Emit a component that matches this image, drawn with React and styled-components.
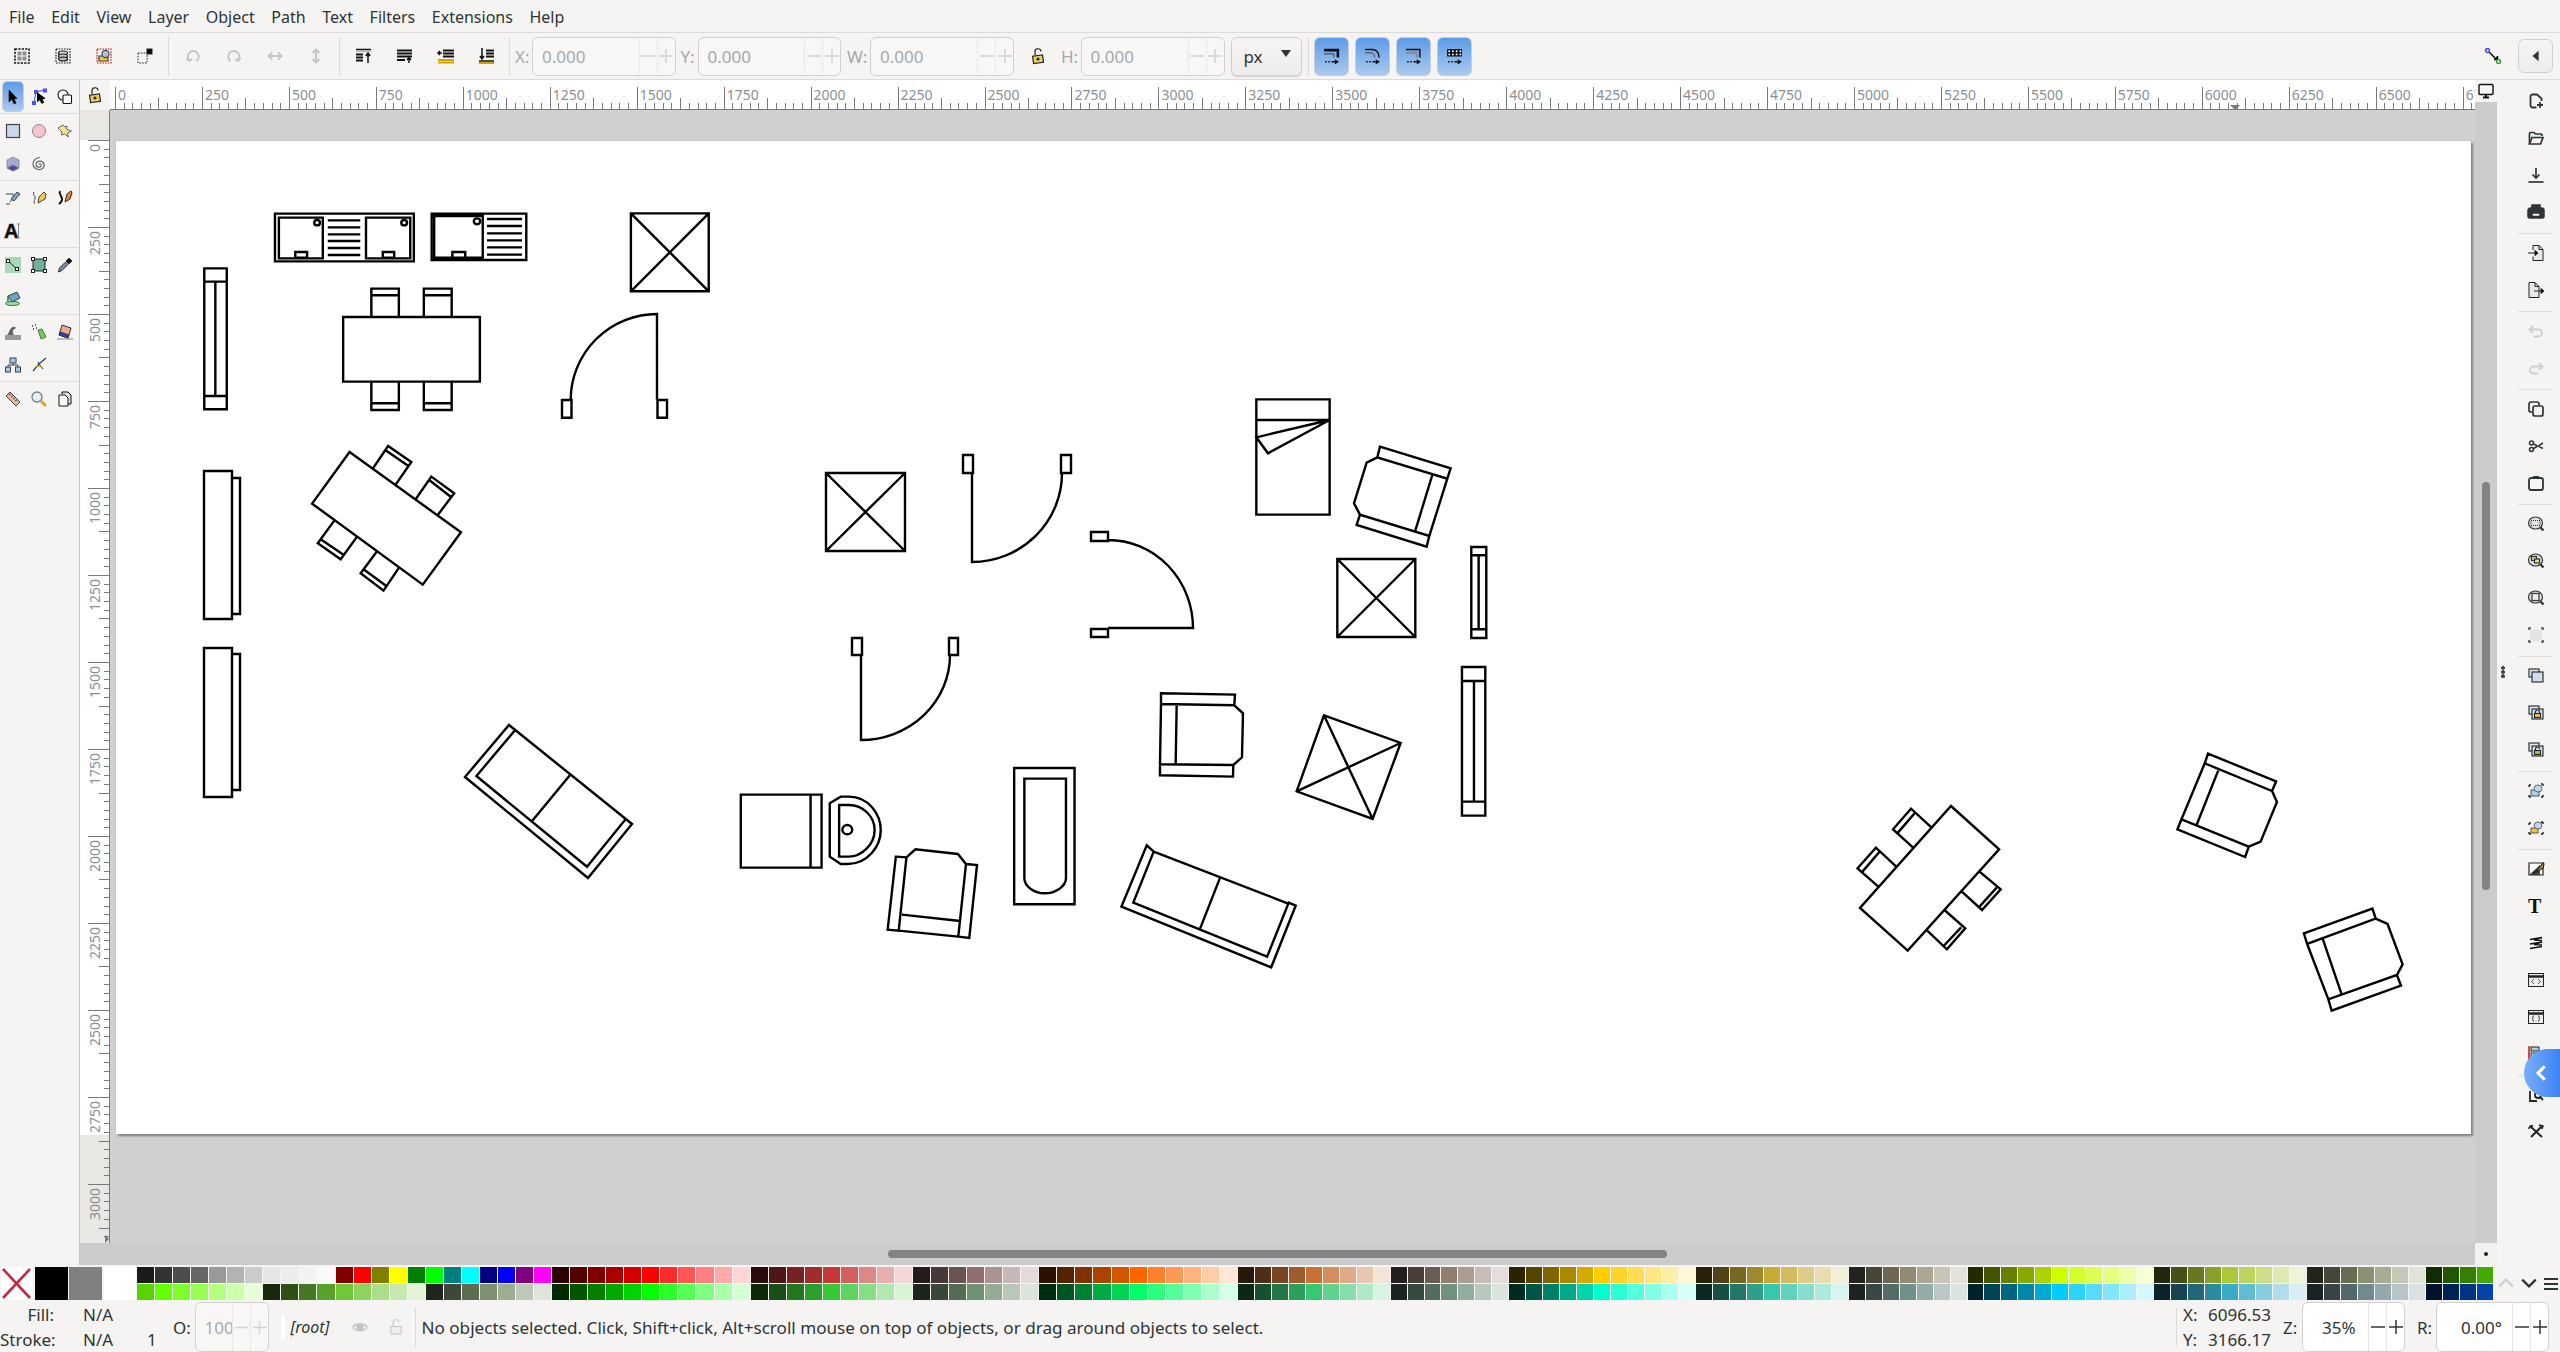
import React from 'react';
import styled, { createGlobalStyle } from 'styled-components';

const GlobalStyle = createGlobalStyle`
  html, body { margin: 0; padding: 0; background: #f5f4f2; }
  body { font-family: "Noto Sans", "Open Sans", sans-serif; color: #2e3436; }
`;

const BAR = '#f5f4f2';
const LINE = '#dddbd8';

const Shell = styled.div`
  width: 2560px;
  height: 1352px;
  display: flex;
  flex-direction: column;
  overflow: hidden;
  position: relative;
  background: ${BAR};
`;

const MenuBar = styled.div`
  height: 32px;
  box-sizing: content-box;
  border-bottom: 1px solid ${LINE};
  display: flex;
  align-items: center;
  padding-left: 9px;
  gap: 16.6px;
  font-size: 16px;
  color: #2e3436;
  span { position: relative; top: 1px; }
`;

const Toolbar = styled.div`
  height: 47px;
  box-sizing: border-box;
  border-bottom: 1px solid ${LINE};
  display: flex;
  align-items: center;
  padding-left: 1px;
`;

const ToolBtn = styled.div`
  width: ${p => p.$w ?? 41}px;
  height: 39px;
  display: flex;
  align-items: center;
  justify-content: center;
  flex: none;
`;

const VSep = styled.div`
  width: 1px;
  height: 39px;
  flex: none;
  background: ${LINE};
  margin: 0 ${p => p.$right ?? 3}px 0 ${p => p.$left ?? 3}px;
`;

const FieldLabel = styled.span`
  width: ${p => p.$w}px;
  margin-left: ${p => p.$ml ?? 0}px;
  flex: none;
  font-size: 17px;
  color: ${p => (p.$off ? '#a4a9ad' : '#2e3436')};
`;

const Spin = styled.div`
  width: ${p => p.$w}px;
  height: ${p => p.$h ?? 39}px;
  flex: none;
  box-sizing: border-box;
  display: flex;
  border: 1px solid #d2d0cc;
  border-radius: 6px;
  background: ${p => (p.$off ? '#f8f7f5' : '#ffffff')};
  color: ${p => (p.$off ? '#a4a9ad' : '#2e3436')};
  font-size: 17px;
  overflow: hidden;
`;

const SpinValue = styled.div`
  flex: 1;
  display: flex;
  align-items: center;
  padding-left: ${p => p.$pad ?? 9}px;
  min-width: 0;
`;

const SpinCell = styled.div`
  width: 17px;
  flex: none;
  display: flex;
  align-items: center;
  justify-content: center;
  border-left: 1px solid ${p => (p.$off ? '#e9e8e5' : '#e6e5e2')};
`;

const Dropdown = styled.div`
  width: 71px;
  height: 39px;
  margin-left: 6px;
  box-sizing: border-box;
  flex: none;
  display: flex;
  align-items: center;
  justify-content: space-between;
  padding: 0 10px 0 12px;
  border: 1px solid #d2d0cc;
  border-radius: 6px;
  background: linear-gradient(#f6f5f3, #eeedeb);
  box-shadow: 0 1px 1px rgba(0, 0, 0, 0.15);
  font-size: 17px;
`;

const Caret = styled.span`
  width: 0;
  height: 0;
  margin-bottom: 5px;
  border-left: 5px solid transparent;
  border-right: 5px solid transparent;
  border-top: 7px solid #2e3436;
`;

const BlueBtn = styled.div`
  width: 35px;
  height: 39px;
  box-sizing: border-box;
  flex: none;
  margin-right: 6px;
  display: flex;
  align-items: center;
  justify-content: center;
  border: 1px solid #c4cfdb;
  border-radius: 6px;
  background: linear-gradient(#5d9be8, #abc9ee);
`;

const ToolbarEnd = styled.div`
  margin-left: auto;
  display: flex;
  align-items: center;
  padding-right: 7px;
`;

const SnapSlot = styled.div`
  width: 22px;
  margin-right: 14px;
  display: flex;
  justify-content: center;
`;

const CollapseBtn = styled.div`
  width: 35px;
  height: 34px;
  box-sizing: border-box;
  display: flex;
  align-items: center;
  justify-content: center;
  border: 1px solid #d2d0cc;
  border-radius: 6px;
  background: linear-gradient(#f6f5f3, #eeedeb);
`;

const Main = styled.div`
  height: 1185px;
  display: flex;
`;

const LeftTools = styled.div`
  width: 80px;
  flex: none;
  box-sizing: border-box;
  border-right: 1px solid #c9c8c5;
  padding-right: 1px;
`;

const ToolGroup = styled.div`
  display: grid;
  grid-template-columns: repeat(3, 26px);
  grid-auto-rows: 33px;
  border-bottom: 1px solid ${LINE};
  &:last-child { border-bottom: 0; }
`;

const ToolCell = styled.div`
  display: flex;
  align-items: center;
  justify-content: center;
  box-sizing: border-box;
  ${p => p.$active && `
    margin: 1px 2px 1px 2px;
    border-radius: 5px;
    border: 1px solid #c4cfdb;
    background: linear-gradient(#5d9be8, #abc9ee);
  `}
`;

const Workspace = styled.div`
  flex: 1;
  display: grid;
  grid-template-columns: 30px 2365px 22px;
  grid-template-rows: 30px 1133px 22px;
`;

const Corner = styled.div`
  background: ${BAR};
  display: flex;
  align-items: center;
  justify-content: center;
`;

const RulerSvg = styled.svg`
  display: block;
  background: #ffffff;
  text { font-family: "Noto Sans", sans-serif; font-size: 14px; fill: #8b8f92; }
  line { stroke: #77797b; stroke-width: 1; shape-rendering: crispEdges; }
`;

const Canvas = styled.div`
  background: #d0d0d0;
  padding: 31px 0 0 6px;
  overflow: hidden;
`;

const Page = styled.div`
  width: 2355px;
  height: 993px;
  background: #ffffff;
  box-shadow: 0 0 1px #9a9a9a, 2px 2px 2px #7d7d7d;
`;

const Drawing = styled.svg`
  display: block;
  fill: none;
  stroke: #000000;
  * { vector-effect: non-scaling-stroke; stroke-width: 2.4px; stroke-linejoin: miter; }
`;

const MonitorCell = styled.div`
  background: #cbcbcb;
`;

const MonitorBtn = styled.div`
  width: 22px;
  height: 22px;
  background: ${BAR};
  display: flex;
  align-items: center;
  justify-content: center;
`;

const VTrack = styled.div`
  background: #cbcbcb;
  padding: 372px 0 0 7px;
`;

const VThumb = styled.div`
  width: 8px;
  height: 408px;
  border-radius: 4px;
  background: #808484;
`;

const HTrack = styled.div`
  grid-column: 1 / span 2;
  background: #cbcbcb;
  padding: 7px 0 0 808px;
`;

const HThumb = styled.div`
  width: 779px;
  height: 8px;
  border-radius: 4px;
  background: #808484;
`;

const CornerDot = styled.div`
  background: #f2f1ef;
  display: flex;
  align-items: center;
  justify-content: center;
  &::before {
    content: '';
    width: 4px;
    height: 4px;
    border-radius: 50%;
    background: #222;
  }
`;

const RightTools = styled.div`
  flex: 1;
  padding: 2.5px 0 0 21px;
  position: relative;
`;

const DockHandle = styled.div`
  position: absolute;
  left: 4px;
  top: 586px;
  width: 4px;
  height: 12px;
  background: radial-gradient(circle at 2px 2px, #444 1.7px, transparent 2px) 0 0 / 4px 4.2px repeat-y;
`;

const CmdBtn = styled.div`
  width: 35px;
  height: 37px;
  display: flex;
  align-items: center;
  justify-content: center;
`;

const CmdSep = styled.div`
  width: 35px;
  height: 1px;
  margin: 2px 0 1px;
  background: ${LINE};
`;

const FloatTab = styled.div`
  position: absolute;
  right: 0;
  top: 969px;
  width: 36px;
  height: 48px;
  border-radius: 24px 0 0 24px;
  background: linear-gradient(90deg, #79aef5, #3d84f7);
  display: flex;
  align-items: center;
  justify-content: center;
`;

const PaletteBar = styled.div`
  height: 37px;
  box-sizing: border-box;
  padding: 2px 0 0 1px;
  display: flex;
  flex: none;
`;

const BigSwatch = styled.div`
  width: ${p => p.$w}px;
  margin-right: ${p => p.$mr}px;
  height: 33px;
  flex: none;
  background: ${p => p.$color};
`;

const NoneMark = styled.svg`
  display: block;
  width: 31px;
  height: 33px;
`;

const SwatchGrid = styled.div`
  display: grid;
  grid-template-columns: repeat(61, 18.06px) repeat(74, 16.97px);
  grid-template-rows: 17px 17px;
  height: 34px;
  flex: none;
`;

const Swatch = styled.div`
  margin: 0 1px 1px 0;
  background: ${p => p.$color};
`;

const PaletteEnd = styled.div`
  display: flex;
  align-items: center;
  padding: 0 0 3px 3px;
  gap: 5px;
`;

const StatusBar = styled.div`
  height: 50px;
  display: flex;
  align-items: center;
  font-size: 17px;
  padding-right: 11px;
`;

const StyleBlock = styled.div`
  width: 173px;
  flex: none;
  display: grid;
  grid-template-columns: 54px 29px 64px auto;
  grid-auto-rows: 25px;
  align-items: center;
`;

const StyleKey = styled.span`
  grid-column: 1;
  text-align: right;
`;

const StyleVal = styled.span`
  grid-column: ${p => p.$col};
`;

const LayerTick = styled.div`
  width: 4px;
  height: 24px;
  margin: 0 6px 0 12px;
  background: #ffffff;
  flex: none;
`;

const LayerName = styled.span`
  font-style: italic;
  font-size: 16px;
  width: 51px;
  flex: none;
`;

const StatusIcon = styled.div`
  width: 36px;
  flex: none;
  display: flex;
  justify-content: center;
`;

const Message = styled.span`
  margin-left: 6px;
  flex: 1;
  font-size: 17.1px;
  white-space: nowrap;
`;

const Coords = styled.div`
  width: 107px;
  flex: none;
  box-sizing: border-box;
  padding-left: 6px;
  height: 38px;
  border-left: 1px solid ${LINE};
  display: grid;
  grid-template-columns: 25px auto;
  grid-auto-rows: 25px;
  align-items: center;
  align-content: center;
`;

const Icon = styled.svg`
  display: block;
  width: ${p => p.$s ?? 16}px;
  height: ${p => p.$s ?? 16}px;
  flex: none;
  overflow: visible;
`;

const TextIcon = styled.svg`
  display: block;
  width: 16px;
  height: 16px;
  flex: none;
  overflow: visible;
  text { font-weight: 700; fill: #111; }
`;

const G = (p) => <Icon viewBox="0 0 16 16" $s={p.s} fill="none" stroke={p.c ?? '#2e3436'} strokeWidth={p.w ?? 1.5}>{p.children}</Icon>;

const ICONS = {
  selAll: <G c="#111" w={1.5}><rect x="1" y="1" width="14" height="14" strokeDasharray="2.2 1.2" /><rect x="3.5" y="3.5" width="4" height="4" fill="#8e8e8e" stroke="none" /><rect x="8.5" y="3.5" width="4" height="4" fill="#8e8e8e" stroke="none" /><rect x="3.5" y="8.5" width="4" height="4" fill="#8e8e8e" stroke="none" /><rect x="8.5" y="8.5" width="4" height="4" fill="#8e8e8e" stroke="none" /></G>,
  selLayers: <G c="#111" w={1.2}><rect x="1" y="1" width="14" height="14" strokeDasharray="1.5 1.2" /><ellipse cx="8" cy="5" rx="4.5" ry="2" fill="#ddd" /><ellipse cx="8" cy="8" rx="4.5" ry="2" fill="#ccc" /><ellipse cx="8" cy="11" rx="4.5" ry="2" fill="#bbb" /></G>,
  deselect: <G c="#c00" w={1.1}><rect x="1" y="1" width="14" height="14" strokeDasharray="1.5 1.2" /><path d="M3 8h9v5H3z" fill="#f2c94c" stroke="#333" /><circle cx="9.5" cy="6" r="3.6" fill="#a9c3dc" stroke="#444" /></G>,
  touch: <G c="#222" w={1}><rect x="1" y="5" width="9" height="10" strokeDasharray="1.5 1.3" /><rect x="10" y="1" width="5" height="5" fill="#000" /></G>,
  rotCcw: <G c="#c6c6c6" w={2}><path d="M4 12a5.5 5.5 0 1 1 7.5 1" /><path d="M1.5 10L4 13l3-2" /></G>,
  rotCw: <G c="#c6c6c6" w={2}><path d="M12 12a5.5 5.5 0 1 0-7.5 1" /><path d="M14.5 10L12 13l-3-2" /></G>,
  flipH: <G c="#c6c6c6" w={2}><path d="M1.5 8h13M5 4.5L1.5 8 5 11.5M11 4.5L14.5 8 11 11.5" /></G>,
  flipV: <G c="#c6c6c6" w={2}><path d="M8 1.5v13M4.5 5L8 1.5 11.5 5M4.5 11L8 14.5 11.5 11" /></G>,
  raiseTop: <G c="#111"><path d="M0 1.5h15" /><path d="M0 3.5h15" stroke="#bbb" /><path d="M0 6.5h7M0 9.5h7M0 12.5h7" strokeWidth="2" /><path d="M12 15V6M9.8 8L12 5l2.2 3" /></G>,
  raise: <G c="#111"><path d="M0 2.5h15M0 5.5h15M0 8.5h15" strokeWidth="2" /><path d="M0 12h8" strokeWidth="2" /><path d="M12 15v-5M10 12l2-2.5 2 2.5" /></G>,
  lower: <G c="#111"><path d="M5 2.5h11M5 5.5h11M5 8.5h11" strokeWidth="2" /><path d="M0 12h16M0 14.5h16" stroke="#d2a300" strokeWidth="2" /><path d="M4 5H0M2 3L0 5l2 2" /></G>,
  lowerBot: <G c="#111"><path d="M7 2.5h8M7 5.5h8M7 8.5h8" strokeWidth="2" /><path d="M0 13h15" /><path d="M0 15h15" stroke="#d2a300" strokeWidth="2" /><path d="M3 0v10M1 8l2 3 2-3" /></G>,
  lockOpen: <G c="#222" w={1.2}><rect x="3" y="7.5" width="10" height="7.5" fill="#f0d060" transform="rotate(-8 8 11)" /><path d="M5 7V4a3 3 0 0 1 6-.5" /><circle cx="8" cy="11" r="1" fill="#333" /></G>,
  lockGray: <G c="#ccc" w={1.2}><rect x="3" y="7.5" width="10" height="7.5" fill="#eee" /><path d="M5 7V4a3 3 0 0 1 6-.5" /></G>,
  eye: <G c="#c4c4c4"><path d="M1 8c2-4 12-4 14 0-2 5-12 5-14 0z" /><circle cx="8" cy="8" r="3" fill="#c4c4c4" /></G>,
  snap: <G c="#000" w={1.4}><path d="M3 3l9 9" /><path d="M9 11.5h3.5V8" fill="#000" /><circle cx="2.5" cy="2.5" r="2" stroke="#4a4af0" fill="#ccd" /><circle cx="13.5" cy="13.5" r="2" stroke="#3a9a3a" fill="#cec" /></G>,
  monitor: <G c="#111" w={1.4}><rect x="1" y="1.5" width="14" height="10" rx="1" /><path d="M5 14.5h6" strokeWidth="2" /><path d="M8 12v2" strokeWidth="2" /></G>,
  select: <G c="#000" w={0.6}><path d="M4 1l8 8.5H9l2 4.5-2 1-2-4.7L4 13z" fill="#000" /></G>,
  node: <G c="#4a4af0" w={1}><path d="M3 14L5 3l9-2" /><rect x="1.5" y="12.5" width="3" height="3" fill="#5a5af5" /><rect x="3.5" y="1.5" width="3" height="3" fill="#5a5af5" /><rect x="12.5" y="0" width="3" height="3" fill="#5a5af5" /><path d="M6.5 4L14 9.5h-3l1.5 4-1.8.8L9 10.5l-2.5 2z" fill="#000" stroke="#000" /></G>,
  builder: <G c="#111" w={1.1}><circle cx="6" cy="6" r="5" fill="#fff" /><rect x="6" y="6" width="8.5" height="8.5" rx="1" fill="#fff" /></G>,
  rect: <G c="#444" w={1.2}><rect x="1.5" y="1.5" width="13" height="13" fill="#c7d8ea" /></G>,
  ellipse: <G c="#888" w={1}><circle cx="8" cy="8" r="6.5" fill="#f7c3cd" /></G>,
  star: <G c="#666" w={1}><path d="M1 5l5-3 2 2 2-1-.5 3 5 2-4 2 1 4-4-3-3 1 .5-3z" fill="#f5e487" /></G>,
  box: <G c="#888" w={0.8}><path d="M8 1l6 3v8l-6 3-6-3V4z" fill="#a6a9d4" /><path d="M2 12l6-3 6 3-6 3z" fill="#4a4aa0" /></G>,
  spiral: <G c="#666" w={1.2}><path d="M8 8.5c1-1.5 3 0 2 1.5-1 2-5 1.5-5-1.5 0-3 4-4.5 6.5-2.5 3 2.5 1.5 7-2 7.5-4 .7-7.5-2-7.5-5.5C2 4.5 5 1.5 9 1.5" /></G>,
  pen: <G c="#444" w={1}><path d="M1 4h7c1 2-1 5-3 8 M1 14h4" /><path d="M6 9l6-7 3 2-6 7z" fill="#7aa7cf" /></G>,
  pencil: <G c="#444" w={1}><path d="M3 2c-2 3 2 4 1 7-.5 2-2 3 0 5" /><path d="M7 13l1-6 5-5 2 2-1 5z" fill="#f2c94c" /></G>,
  callig: <G c="#111" w={2}><path d="M3 1C1 5 6 6 5 10c-.5 2-2 3-3 4" /><path d="M8 12l2-8 4-3 1 2-2 6z" fill="#e08a3a" strokeWidth="1" stroke="#422" /></G>,
  gradient: <G c="#222" w={1}><rect x="0" y="0" width="16" height="16" fill="#a8d9b6" stroke="none" /><path d="M3 4l9 8" /><rect x="1.5" y="2.5" width="3" height="3" fill="#fff" /><rect x="10.5" y="10.5" width="3" height="3" fill="#fff" /></G>,
  mesh: <G c="#222" w={1}><rect x="2" y="2" width="12" height="12" fill="#6fb09a" /><rect x="0.5" y="0.5" width="3" height="3" fill="#fff" /><rect x="12.5" y="0.5" width="3" height="3" fill="#fff" /><rect x="0.5" y="12.5" width="3" height="3" fill="#fff" /><rect x="12.5" y="12.5" width="3" height="3" fill="#fff" /></G>,
  dropper: <G c="#333" w={1}><path d="M1.5 15l1-4 6-6 2.5 2.5-6 6z" fill="#6f8db0" /><path d="M9 4l3-3 3 3-3 3z" fill="#111" /></G>,
  bucket: <G c="#2d7a3a" w={1}><ellipse cx="7.5" cy="13.5" rx="7" ry="2" fill="#a8d9a0" /><path d="M3 6l9-4 3 6-8 4z" fill="#6da3c7" stroke="#345" /><path d="M3 6v6" strokeWidth="1.5" /></G>,
  tweak: <G c="#777" w={1}><path d="M0 11h16v5H0z" fill="#999" stroke="none" /><path d="M2 11c2-1 2-7 6-8 3-1 3 1 2 2-2 0-3 3-1 6z" fill="#666" stroke="none" /></G>,
  spray: <G c="#333" w={1}><path d="M7 6l4-1 4 8-5 2z" fill="#7ec850" stroke="#385" /><path d="M1 2h1M4 1h1M2 5h1M5 4h1" strokeWidth="1.5" /></G>,
  eraser: <G c="#333" w={1}><path d="M5 1l9 3-3 10-9-3z" fill="#f0a890" /><path d="M3 8l9 3-1 3-9-3z" fill="#3a3ad0" /><path d="M0 15h16" stroke="#888" /></G>,
  connector: <G c="#345" w={1}><path d="M8 4v4M3 11V8h10v3" /><rect x="5" y="1" width="6" height="5" fill="#a9c6e2" /><rect x="0.5" y="10" width="5" height="5" fill="#a9c6e2" /><rect x="10.5" y="10" width="5" height="5" fill="#a9c6e2" /></G>,
  compass: <G c="#345" w={1.2}><path d="M15 1l-7 6-6 7M8 7l4 5M8 7l-1-2" /><path d="M5 9l6 1" stroke="#e0b030" /></G>,
  measure: <G c="#444" w={1}><path d="M1 5l4-4 10 10-4 4z" fill="#e8b8a0" /><path d="M4 4l2-1M6 6l2-1M8 8l2-1M10 10l2-1" /></G>,
  zoom: <G c="#6a7f90" w={1.3}><circle cx="6" cy="6" r="5" fill="#e6eef6" /><path d="M10 10l5 5" stroke="#e0a030" strokeWidth="2.6" /></G>,
  pages: <G c="#111" w={1}><path d="M5 3V1h6l3 3v9h-3" fill="#ddd" /><path d="M2 4h6l3 3v8H2z" fill="#fff" /></G>,
  newDoc: <G><path d="M8.5 14.5H4.5a2 2 0 0 1-2-2v-9a2 2 0 0 1 2-2H9l4.5 4v2.5" strokeWidth="1.8" /><path d="M12 9v6M9 12h6" strokeWidth="1.8" /></G>,
  open: <G w={1.7}><path d="M1.5 14V3.5a1 1 0 0 1 1-1h3.5l1.5 1.5h5.5a1 1 0 0 1 1 1V6" /><path d="M1.5 14l2.5-6.5h11l-2.5 6.5z" /></G>,
  save: <G w={1.7}><path d="M8 1v10M4.5 7.5L8 11l3.5-3.5" /><path d="M0.5 15h15" /></G>,
  print: <G stroke="none"><path d="M4 1h8v2H4zM2.5 4h11A2.5 2.5 0 0 1 16 6.5v6a1.5 1.5 0 0 1-1.5 1.5h-13A1.5 1.5 0 0 1 0 12.5v-6A2.5 2.5 0 0 1 2.5 4zM4 9v3.5h8V9z" fill="#2e3436" fillRule="evenodd" /></G>,
  importDoc: <G c="#222" w={1}><path d="M5 5V.5h6l4 4v11H5v-4" fill="#e9e9e9" /><path d="M11 .5v4h4" /><path d="M0 8h9" /><path d="M7 5.5L10 8l-3 2.5z" fill="#000" /></G>,
  exportDoc: <G c="#222" w={1}><path d="M1 .5h6l4 4v11H1z" fill="#e9e9e9" /><path d="M7 .5v4h4" /><path d="M6 9h9" /><path d="M13 6.5L16 9l-3 2.5z" fill="#000" /></G>,
  undo: <G c="#cfcfcf" w={1.8}><path d="M5 3L1.5 6.5 5 10" /><path d="M1.5 6.5h9a3.5 3.5 0 0 1 3.5 3.5c0 2-1.5 3.5-3.5 3.5H6" /></G>,
  redo: <G c="#cfcfcf" w={1.8}><path d="M11 3l3.5 3.5L11 10" /><path d="M14.5 6.5h-9A3.5 3.5 0 0 0 2 10c0 2 1.5 3.5 3.5 3.5H10" /></G>,
  copy: <G w={1.7}><path d="M4 11H3a2 2 0 0 1-2-2V3a2 2 0 0 1 2-2h6a2 2 0 0 1 2 2v1" /><rect x="5" y="5" width="10" height="10" rx="2" /></G>,
  cut: <G w={1.5}><circle cx="3.5" cy="5" r="2" /><circle cx="3.5" cy="11.5" r="2" /><path d="M5.5 6L15 10.5M5.5 10.5l3.5-2M11 7.5l4-2.5" /></G>,
  paste: <G w={1.8}><rect x="1" y="3" width="14" height="12" rx="2" /><path d="M5 2.5h6" strokeWidth="3" /></G>,
  zoomSel: <G c="#333" w={1.2}><ellipse cx="7.5" cy="7" rx="7" ry="6" fill="#dfe3e6" /><rect x="3" y="4.5" width="9" height="5" strokeDasharray="1 1" /><path d="M12.5 11.5l3 3" strokeWidth="2.4" /></G>,
  zoomDraw: <G c="#333" w={1.2}><ellipse cx="7.5" cy="7" rx="7" ry="6" fill="#dfe3e6" /><rect x="3.5" y="3.5" width="5" height="4" fill="#f0d890" /><rect x="6.5" y="6" width="5" height="4" fill="#f0d890" /><path d="M12.5 11.5l3 3" strokeWidth="2.4" /></G>,
  zoomPage: <G c="#333" w={1.2}><ellipse cx="7.5" cy="7" rx="7" ry="6" fill="#dfe3e6" /><rect x="4" y="3.5" width="7" height="7" fill="#eee" /><path d="M12.5 11.5l3 3" strokeWidth="2.4" /></G>,
  zoomCenter: <G c="#444" w={1}><rect x="2" y="2" width="12" height="12" fill="#e4e4e4" stroke="none" /><path d="M1 3V1h2M13 1h2v2M15 13v2h-2M3 15H1v-2" strokeWidth="1.5" /></G>,
  dup: <G c="#222" w={1.1}><rect x="1" y="1" width="10" height="8" fill="#dde8f2" /><rect x="4" y="4" width="11" height="10" fill="#cfdfee" /></G>,
  clone: <G c="#222" w={1.1}><rect x="1" y="1" width="10" height="8" fill="#dde8f2" /><rect x="4" y="4" width="11" height="10" fill="#cfdfee" /><rect x="6.5" y="8.5" width="6" height="4" fill="#f0c040" /><path d="M7.5 8.5V7a2 2 0 0 1 4 0v1.5" /></G>,
  unlink: <G c="#222" w={1.1}><rect x="1" y="1" width="10" height="8" fill="#dde8f2" /><rect x="4" y="4" width="11" height="10" fill="#cfdfee" /><rect x="6.5" y="8.5" width="6" height="4" fill="#8fc860" /><path d="M7.5 8.5V7a2 2 0 0 1 4 0" /></G>,
  group: <G c="#222" w={1}><path d="M1 2h2M13 1h2M1 14h2M13 14h2M1 2v2M15 1v2M1 12v2M15 12v2" strokeWidth="1.4" /><path d="M3 7h8v6H3z" fill="#b8cde0" stroke="#456" /><ellipse cx="10" cy="5.5" rx="4" ry="3.5" fill="#c5d6e6" stroke="#567" /></G>,
  ungroup: <G c="#222" w={1}><path d="M1 3h2M13 2h2M1 14h2M13 14h2M1 3v2M15 2v2M1 12v2M15 12v2" strokeWidth="1.4" /><path d="M3 8h7v5H3z" fill="#f0c040" stroke="#654" /><ellipse cx="10" cy="5.5" rx="4" ry="3.5" fill="#c5d6e6" stroke="#567" /></G>,
  fillStroke: <G c="#222" w={1.2}><path d="M1 2h14v12H1z" fill="#fff" /><path d="M1 14L12 4v10z" fill="#444" stroke="none" /><path d="M5 13l8-8 2-3 1 1-1 4z" fill="#f0c040" stroke="#222" /></G>,
  layers: <G c="#111" w={1.5}><path d="M2 4.5l12-2-8 2.5 8 .5" /><path d="M2 9l12-2-8 2.5 8 .5" /><path d="M2 13.5l12-2" /></G>,
  xml: <G c="#222" w={1}><rect x="0.5" y="1.5" width="15" height="13" fill="#eee" /><path d="M0.5 4.5h15" strokeWidth="2.5" /><path d="M6 7l-2.5 2.5L6 12M10 7l2.5 2.5L10 12" stroke="#555" /></G>,
  css: <G c="#222" w={1}><rect x="0.5" y="1.5" width="15" height="13" fill="#eee" /><path d="M0.5 4.5h15" strokeWidth="2.5" /><path d="M6 7H5v2l-1 .5 1 .5v2h1M10 7h1v2l1 .5-1 .5v2h-1" stroke="#555" /></G>,
  align: <G c="#222" w={1}><path d="M1 0v16" stroke="#c00" strokeWidth="1.4" /><rect x="3" y="1" width="8" height="4" fill="#b8cde0" /><rect x="3" y="7" width="12" height="4" fill="#eee" /></G>,
  extra: <G c="#222" w={1.8}><path d="M2 4v10h7" /><circle cx="10" cy="8" r="3" /><path d="M12 10l3 3" /></G>,
  tools: <G c="#222" w={2}><path d="M2 2l12 11" /><path d="M14 2L3 13" /><path d="M1 5a3 3 0 0 1 4-3M11 1l4 1-1 3" strokeWidth="1.5" /></G>
};

const BlueIcon = ({ v }) => (
  <Icon viewBox="0 0 16 16" $s={17} fill="none" stroke="#111">
    {v === 0 && (
      <>
        <path d="M1 2h13v7" strokeWidth="2.4" />
        <path d="M1 5.5h9v3.5" strokeWidth="1.2" stroke="#555" />
      </>
    )}
    {v === 1 && (
      <>
        <path d="M1 1.5h7a6 6 0 0 1 6 6V9" strokeWidth="1.4" />
        <path d="M1 4.5h5a4 4 0 0 1 4 4V9" strokeWidth="1.4" stroke="#666" />
      </>
    )}
    {v === 2 && (
      <>
        <path d="M1 1.5h13V9" strokeWidth="1.4" />
        <path d="M1 4.5h10V9" strokeWidth="1.8" stroke="#888" />
      </>
    )}
    {v === 3 && (
      <>
        <rect x="1" y="1" width="14" height="7" fill="#111" stroke="none" />
        <path d="M3 3h.01M6.5 3h.01M10 3h.01M13.5 3h.01M3 6h.01M6.5 6h.01M10 6h.01M13.5 6h.01" stroke="#fff" strokeWidth="1.8" strokeLinecap="round" />
      </>
    )}
    <path d="M2 13h1.5M5 13h1.5M8 13h3" strokeWidth="1.3" />
    <path d="M11 10.5l4 2.5-4 2.5z" fill="#111" stroke="none" />
  </Icon>
);

const SpinGlyphs = ({ off, size = 14 }) => {
  const c = off ? '#d3d3d1' : '#2e3436';
  return (
    <>
      <SpinCell $off={off}><Icon viewBox="0 0 14 14" $s={size} stroke={c} strokeWidth="1.5"><path d="M0 7h14" /></Icon></SpinCell>
      <SpinCell $off={off}><Icon viewBox="0 0 14 14" $s={size} stroke={c} strokeWidth="1.5"><path d="M0 7h14M7 0v14" /></Icon></SpinCell>
    </>
  );
};

const hueRamp = ([r, g, b]) => {
  const steps = [
    [0x2b, 0], [0x55, 0], [0x80, 0], [0xaa, 0], [0xd4, 0], [0xff, 0], [0xff, 0x2a], [0xff, 0x55], [0xff, 0x80], [0xff, 0xaa], [0xff, 0xd5],
    [0x28, 0x0b], [0x50, 0x16], [0x78, 0x21], [0xa0, 0x2c], [0xc8, 0x37], [0xd3, 0x5f], [0xde, 0x87], [0xe9, 0xaf], [0xf4, 0xd7],
    [0x24, 0x1c], [0x48, 0x37], [0x6c, 0x53], [0x91, 0x6f], [0xac, 0x93], [0xc8, 0xb7], [0xe3, 0xdb]
  ];
  return steps.map(([hi, lo]) => {
    const mix = f => Math.round(lo + (hi - lo) * f);
    return `rgb(${mix(r)},${mix(g)},${mix(b)})`;
  });
};

const PALETTE = [
  '#1a1a1a', '#333333', '#4d4d4d', '#666666', '#999999', '#b3b3b3', '#cccccc', '#e6e6e6', '#ececec', '#f2f2f2', '#f9f9f9',
  '#800000', '#ff0000', '#808000', '#ffff00', '#008000', '#00ff00', '#008080', '#00ffff', '#000080', '#0000ff', '#800080', '#ff00ff',
  ...[[1, 0, 0], [1, 0.4, 0], [1, 0.8, 0], [0.8, 1, 0], [0.4, 1, 0], [0, 1, 0], [0, 1, 0.4], [0, 1, 0.8], [0, 0.8, 1], [0, 0.4, 1]].flatMap(hueRamp)
].slice(0, 270);

const LEFT_GROUPS = [
  ['select', 'node', 'builder'],
  ['rect', 'ellipse', 'star', 'box', 'spiral'],
  ['pen', 'pencil', 'callig', 'A'],
  ['gradient', 'mesh', 'dropper', 'bucket'],
  ['tweak', 'spray', 'eraser', 'connector', 'compass'],
  ['measure', 'zoom', 'pages']
];

const RIGHT_GROUPS = [
  ['newDoc', 'open', 'save', 'print'],
  ['importDoc', 'exportDoc'],
  ['undo', 'redo'],
  ['copy', 'cut', 'paste'],
  ['zoomSel', 'zoomDraw', 'zoomPage', 'zoomCenter'],
  ['dup', 'clone', 'unlink'],
  ['group', 'ungroup'],
  ['fillStroke', 'T', 'layers', 'xml', 'css', 'align'],
  ['extra', 'tools']
];

const TopRuler = () => {
  const ticks = Array.from({ length: 272 }, (_, i) => i);
  return (
    <RulerSvg width="2365" height="30" viewBox="0 0 2365 30">
      <line x1="0" x2="2365" y1="29.5" y2="29.5" />
      {ticks.map(i => {
        const x = Math.round(5 + i * 8.695) + 0.5;
        const top = i % 10 === 0 ? 7 : i % 5 === 0 ? 18 : 23;
        return <line key={i} x1={x} x2={x} y1={top} y2="29" />;
      })}
      {ticks.filter(i => i % 10 === 0).map(i => (
        <text key={i} x={8 + i * 8.695} y="20">{i * 25}</text>
      ))}
      <path d="M2120 25h10l-5 5z" fill="#777" />
    </RulerSvg>
  );
};

const LeftRuler = () => {
  const ticks = Array.from({ length: 128 }, (_, i) => i);
  return (
    <RulerSvg width="30" height="1133" viewBox="0 0 30 1133">
      <rect x="0" y="0" width="30" height="1133" fill="#e8e7e3" />
      <rect x="0" y="30" width="30" height="995" fill="#ffffff" />
      <line x1="29.5" x2="29.5" y1="0" y2="1133" />
      {ticks.map(i => {
        const y = Math.round(30 + i * 8.7) + 0.5;
        const left = i % 10 === 0 ? 8 : i % 5 === 0 ? 19 : 24;
        return <line key={i} x1={left} x2="29" y1={y} y2={y} />;
      })}
      {ticks.filter(i => i % 10 === 0).map(i => (
        <text key={i} transform={`translate(20 ${34 + i * 8.7}) rotate(-90)`} textAnchor="end">{i * 25}</text>
      ))}
      <path d="M25 1125v8l4-4z" fill="#777" />
    </RulerSvg>
  );
};

const XBox = ({ p }) => {
  const [a, b, c, d] = p;
  return <path d={`M${a}L${b}L${c}L${d}ZM${a}L${c}M${b}L${d}`} />;
};

const DOORS = [
  'M657 400V314A86.5 86 0 0 0 570.7 400M562 400h9.5v17.7H562zM657.5 400H667v17.7h-9.5z',
  'M972 473V562A90 89 0 0 0 1062 473M963 455h10v18H963zM1061 455h10v18h-10z',
  'M1108 540A85 88 0 0 1 1193 628H1108M1091 532h17v9h-17zM1091 629h17v8h-17z',
  'M861 655V740A89 85 0 0 0 950 655M852 638h10v17h-10zM949 638h9v17h-9z'
];

const Plan = () => (
  <Drawing width="2355" height="993" viewBox="116 141 2355 993">
    {/* coordinates inside each group are read off a crop of that area */}
    <g transform="translate(180 190) scale(.357 .3333)">
      <path d="M266 71H655V214H266ZM277 83H400V205H277ZM521 83H645V205H521ZM323 203V186H356V203ZM568 203V186H600V203Z" />
      <ellipse cx="384" cy="98" rx="8" ry="8" />
      <ellipse cx="628" cy="98" rx="8" ry="8" />
      <path d="M414 91H505M414 112H505M414 133H505M414 153H505M414 174H505M414 195H505" />
      <path d="M705 71H970V210H705ZM712 78H848V203H712ZM763 203V186H799V203Z" />
      <ellipse cx="832" cy="94" rx="9" ry="9" />
      <path d="M860 87H958M860 108H958M860 130H958M860 151H958M860 172H958M860 194H958" />
      <XBox p={['1263 70', '1481 70', '1481 304', '1263 304']} />
      <path d="M68 235H131V658H68ZM68 275H131M68 618H131M99 275V618" />
      <path d="M457 381H840V575H457Z" />
      <path d="M536 381V296H613V381M536 316H613M683 381V296H761V381M683 316H761" />
      <path d="M536 575V660H613V575M536 640H613M683 575V660H761V575M683 640H761" />
      <path d="M475 786L787 1027L680 1184L370 941Z" />
      <path d="M540 836L583 768L648 816L604 884M578 782L640 828" />
      <path d="M660 928L704 860L768 910L722 975M698 870L760 922" />
      <path d="M432 992L386 1060L450 1108L496 1040M394 1048L458 1094" />
      <path d="M552 1084L506 1150L570 1202L614 1132M514 1138L578 1188" />
    </g>
    <path d="M204 471H232V619H204ZM232 478H240V614H232Z" />
    <path d="M204 648H232V797H204ZM232 654H240V790H232Z" />
    <path d="M465 777L588 878L632 824L509 725ZM476.4 776L587 866.8L625.8 819L515.2 730ZM531.7 821.4L570.5 774.5" />
    {DOORS.map(d => <path key={d} d={d} />)}
    <XBox p={['826 473', '905 473', '905 551', '826 551']} />
    <g transform="translate(700 740) scale(.408 .3333)">
      <path d="M100 164H298V383H100ZM271 164V383" />
      <path d="M318 190L345 170H365C415 170 443 225 443 270C443 320 410 372 362 372H345L318 350Z" />
      <path d="M341 195H365C400 195 428 230 428 270C428 315 395 350 365 350H341Z" />
      <ellipse cx="361" cy="269" rx="12" ry="14" />
      <path d="M480 350L506 352L487 572L460 569ZM506 352L528 328L632 342L652 372L679 375L660 594L633 590L487 572M652 372L633 590M495 524L638 543" />
      <path d="M770 84H918V493H770Z" />
      <path d="M795 116H897V415C897 440 870 460 845 460C820 460 795 440 795 415Z" />
      <path d="M1033 500L1400 682L1460 497L1443 488L1390 650L1062 488L1112 335L1095 316ZM1112 335L1440 490M1275 412L1225 568" />
    </g>
    <g transform="translate(1140 380) scale(.3333)">
      <path d="M349 58H569V404H349ZM349 120H569M349 172L569 120L384 220Z" />
      <path d="M720 200L932 265L922 296L712 232ZM712 232L680 248L642 370L660 404L868 468L922 296M660 404L650 435L860 500L868 468M877 285L826 452" />
      <XBox p={['592 537', '826 537', '826 771', '592 771']} />
      <path d="M994 501H1039V774H994ZM994 526H1039M994 748H1039M1016 526V748" />
      <path d="M966 861H1036V1307H966ZM966 903H1036M966 1265H1036M1002 903V1265" />
      <path d="M63 940L285 944L283 976L63 972ZM283 976L309 1000L306 1132L280 1155L60 1153L63 972M60 1153L60 1186L279 1190L280 1155M110 975L107 1153" />
      <XBox p={['552 1006', '782 1089', '698 1317', '470 1234']} />
    </g>
    <g transform="translate(1800 720) scale(.408 .3333)">
      <path d="M370 258L488 388L264 692L147 564Z" />
      <path d="M322 322L272 266L228 328L278 384M282 278L240 338" />
      <path d="M236 440L186 383L141 445L192 500M196 394L153 455" />
      <path d="M440 455L492 508L446 570L396 514M482 503L440 560" />
      <path d="M354 570L405 625L360 688L310 630M395 622L352 678" />
      <path d="M1000 101L1167 184L1157 213L992 130ZM1157 213L1169 246L1129 365L1100 380L935 298L992 130M1100 380L1091 411L925 328L935 298M1025 152L972 315" />
      <path d="M1235 640L1403 566L1411 596L1243 672ZM1411 596L1440 612L1477 733L1463 765L1295 838L1243 672M1463 765L1473 797L1303 872L1295 838M1281 656L1328 825" />
    </g>
  </Drawing>
);

export default function App() {
  return (
    <Shell>
      <GlobalStyle />
      <MenuBar>
        {['File', 'Edit', 'View', 'Layer', 'Object', 'Path', 'Text', 'Filters', 'Extensions', 'Help'].map(m => <span key={m}>{m}</span>)}
      </MenuBar>

      <Toolbar>
        {['selAll', 'selLayers', 'deselect', 'touch'].map(n => <ToolBtn key={n}>{ICONS[n]}</ToolBtn>)}
        <VSep />
        {['rotCcw', 'rotCw', 'flipH', 'flipV'].map(n => <ToolBtn key={n}>{ICONS[n]}</ToolBtn>)}
        <VSep />
        {['raiseTop', 'raise', 'lower', 'lowerBot'].map(n => <ToolBtn key={n}>{ICONS[n]}</ToolBtn>)}
        <VSep $left={2} $right={5} />
        <FieldLabel $w={17} $off>X:</FieldLabel>
        <Spin $w={143.5} $off><SpinValue>0.000</SpinValue><SpinGlyphs off /></Spin>
        <FieldLabel $w={17} $ml={5} $off>Y:</FieldLabel>
        <Spin $w={143.5} $off><SpinValue>0.000</SpinValue><SpinGlyphs off /></Spin>
        <FieldLabel $w={23} $ml={6} $off>W:</FieldLabel>
        <Spin $w={144} $off><SpinValue>0.000</SpinValue><SpinGlyphs off /></Spin>
        <ToolBtn $w={47}>{ICONS.lockOpen}</ToolBtn>
        <FieldLabel $w={19.5} $off>H:</FieldLabel>
        <Spin $w={144} $off><SpinValue>0.000</SpinValue><SpinGlyphs off /></Spin>
        <Dropdown><span>px</span><Caret /></Dropdown>
        <VSep $left={6} $right={5} />
        {[0, 1, 2, 3].map(v => <BlueBtn key={v}><BlueIcon v={v} /></BlueBtn>)}
        <ToolbarEnd>
          <SnapSlot>{ICONS.snap}</SnapSlot>
          <CollapseBtn>
            <Icon viewBox="0 0 16 16" $s={14}><path d="M11 2v12L4 8z" fill="#2e3436" /></Icon>
          </CollapseBtn>
        </ToolbarEnd>
      </Toolbar>

      <Main>
        <LeftTools>
          {LEFT_GROUPS.map((group, gi) => (
            <ToolGroup key={gi}>
              {group.map(n => (
                <ToolCell key={n} $active={n === 'select'}>
                  {n === 'A'
                    ? (
                      <TextIcon viewBox="0 0 16 16">
                        <text x="-1" y="15" fontSize="20" stroke="#111" strokeWidth="0.5" fontFamily="Liberation Sans, sans-serif">A</text>
                        <path d="M13.5 1v14M12 1h3M12 15h3" stroke="#888" strokeWidth="1" fill="none" />
                      </TextIcon>
                    )
                    : ICONS[n]}
                </ToolCell>
              ))}
            </ToolGroup>
          ))}
        </LeftTools>

        <Workspace>
          <Corner>{ICONS.lockOpen}</Corner>
          <TopRuler />
          <MonitorCell><MonitorBtn>{ICONS.monitor}</MonitorBtn></MonitorCell>
          <LeftRuler />
          <Canvas>
            <Page><Plan /></Page>
          </Canvas>
          <VTrack><VThumb /></VTrack>
          <HTrack><HThumb /></HTrack>
          <CornerDot />
        </Workspace>

        <RightTools>
          <DockHandle />
          {RIGHT_GROUPS.map((group, gi) => (
            <div key={gi}>
              {gi > 0 && <CmdSep />}
              {group.map(n => (
                <CmdBtn key={n}>
                  {n === 'T'
                    ? <TextIcon viewBox="0 0 16 16"><text x="0" y="15" fontSize="20" fontFamily="Liberation Serif, serif">T</text></TextIcon>
                    : ICONS[n]}
                </CmdBtn>
              ))}
            </div>
          ))}
          <FloatTab>
            <Icon viewBox="0 0 16 16" $s={18} fill="none" stroke="#fff" strokeWidth="2.8"><path d="M10.5 2L4.5 8l6 6" /></Icon>
          </FloatTab>
        </RightTools>
      </Main>

      <PaletteBar>
        <BigSwatch $w={31} $mr={3} $color="#ffffff">
          <NoneMark viewBox="0 0 31 33" fill="none" stroke="#c32a3f" strokeWidth="2.6"><path d="M2 2l27 29M29 2L2 31" /></NoneMark>
        </BigSwatch>
        <BigSwatch $w={33} $mr={1} $color="#000000" />
        <BigSwatch $w={33} $mr={1.5} $color="#808080" />
        <BigSwatch $w={32} $mr={1.5} $color="#ffffff" />
        <SwatchGrid>
          {PALETTE.map((c, i) => <Swatch key={i} $color={c} />)}
        </SwatchGrid>
        <PaletteEnd>
          <Icon viewBox="0 0 16 16" $s={18} fill="none" stroke="#d0d0d0" strokeWidth="2"><path d="M2 11l6-6 6 6" /></Icon>
          <Icon viewBox="0 0 16 16" $s={18} fill="none" stroke="#2e3436" strokeWidth="2"><path d="M2 5l6 6 6-6" /></Icon>
          <Icon viewBox="0 0 16 16" $s={16} fill="none" stroke="#2e3436" strokeWidth="2"><path d="M1 4h14M1 9h14M1 14h14" /></Icon>
        </PaletteEnd>
      </PaletteBar>

      <StatusBar>
        <StyleBlock>
          <StyleKey>Fill:</StyleKey><StyleVal $col="3">N/A</StyleVal>
          <StyleKey>Stroke:</StyleKey><StyleVal $col="3">N/A</StyleVal><StyleVal $col="4">1</StyleVal>
        </StyleBlock>
        <FieldLabel $w={21.5}>O:</FieldLabel>
        <Spin $w={74} $h={50} $off><SpinValue $pad={9}>100</SpinValue><SpinGlyphs off size={13} /></Spin>
        <LayerTick />
        <LayerName>[root]</LayerName>
        <StatusIcon>{ICONS.eye}</StatusIcon>
        <StatusIcon>{ICONS.lockGray}</StatusIcon>
        <VSep $left={1} $right={0} />
        <Message>No objects selected. Click, Shift+click, Alt+scroll mouse on top of objects, or drag around objects to select.</Message>
        <Coords>
          <span>X:</span><span>6096.53</span>
          <span>Y:</span><span>3166.17</span>
        </Coords>
        <FieldLabel $w={19}>Z:</FieldLabel>
        <Spin $w={103} $h={50}><SpinValue $pad={19}>35%</SpinValue><SpinGlyphs size={14} /></Spin>
        <FieldLabel $w={19} $ml={12}>R:</FieldLabel>
        <Spin $w={113} $h={50}><SpinValue $pad={24}>0.00°</SpinValue><SpinGlyphs size={14} /></Spin>
      </StatusBar>
    </Shell>
  );
}
